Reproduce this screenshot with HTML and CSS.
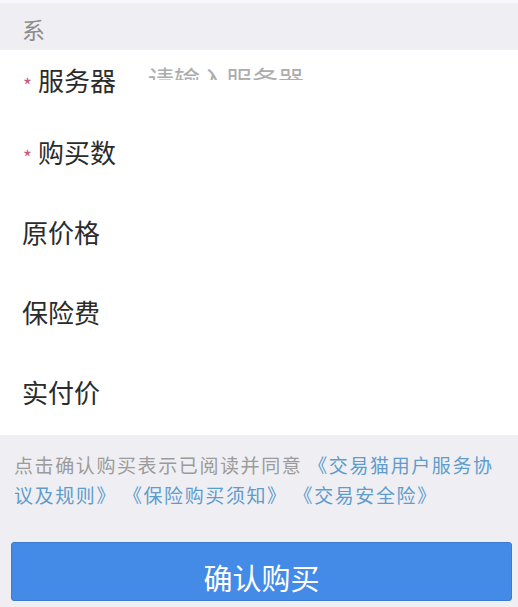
FILE: index.html
```html
<!DOCTYPE html>
<html lang="zh-CN">
<head>
<meta charset="utf-8">
<title>确认购买</title>
<link rel="stylesheet" href="styles.css">
</head>
<body>
<div class="page">
  <div class="top-strip"></div>
  <div class="section-head">系</div>
  <div class="form">
    <div class="row row-first">
      <div class="label"><span class="star">*</span>服务器</div>
      <div class="input"><span class="placeholder">请输入服务器</span></div>
    </div>
    <div class="row">
      <div class="label"><span class="star">*</span>购买数</div>
    </div>
    <div class="row">
      <div class="label">原价格</div>
    </div>
    <div class="row">
      <div class="label">保险费</div>
    </div>
    <div class="row">
      <div class="label">实付价</div>
    </div>
  </div>
  <div class="terms">点击确认购买表示已阅读并同意 <span class="link">《交易猫用户服务协议及规则》</span> <span class="link">《保险购买须知》</span> <span class="link">《交易安全险》</span></div>
  <div class="btn-wrap">
    <button class="btn">确认购买</button>
  </div>
</div>
</body>
</html>
```

FILE: styles.css
```css
* { box-sizing: border-box; }
html, body {
  margin: 0;
  padding: 0;
}
body {
  width: 518px;
  height: 607px;
  overflow: hidden;
  background: #efeff3;
  font-family: "Noto Sans CJK SC", "Noto Sans", sans-serif;
}
.page {
  display: flex;
  flex-direction: column;
}
.top-strip {
  height: 3px;
  background: #f8f8fa;
}
.section-head {
  height: 47px;
  padding: 11px 0 0 22px;
  font-size: 23px;
  line-height: 30px;
  color: #8c8c8c;
  background: #efeff3;
}
.form {
  background: #fff;
  display: flex;
  flex-direction: column;
}
.row {
  height: 80px;
  display: flex;
  align-items: center;
  padding-left: 22px;
}
.row-first {
  height: 65px;
}
.label {
  width: 126px;
  font-size: 26px;
  line-height: 32px;
  color: #2b2b2b;
  display: flex;
  align-items: center;
  flex: none;
  margin-bottom: 6px;
}
.star {
  display: inline-block;
  width: 16px;
  padding-left: 1px;
  font-size: 19px;
  line-height: 16px;
  color: #c25c78;
  margin-top: 10px;
}
.input {
  height: 14px;
  overflow: hidden;
  align-self: flex-start;
  margin-top: 16px;
}
.placeholder {
  display: block;
  font-size: 26px;
  line-height: 32px;
  margin-top: -3px;
  color: #acacac;
  white-space: nowrap;
}
.terms {
  padding: 15px 8px 0 14px;
  font-size: 19px;
  line-height: 30px;
  letter-spacing: 1.6px;
  color: #9b9b9b;
}
.link {
  color: #5f9ccc;
}
.btn-wrap {
  padding: 32px 6px 0 11px;
}
.btn {
  width: 100%;
  height: 59px;
  border: 1px solid #3a7ccf;
  border-radius: 3px;
  background: #438be6;
  color: #fff;
  font-family: "Noto Sans CJK SC", "Noto Sans", sans-serif;
  font-size: 29px;
  line-height: 36px;
  padding: 10px 0 0 0;
  display: flex;
  align-items: center;
  justify-content: center;
}
```
